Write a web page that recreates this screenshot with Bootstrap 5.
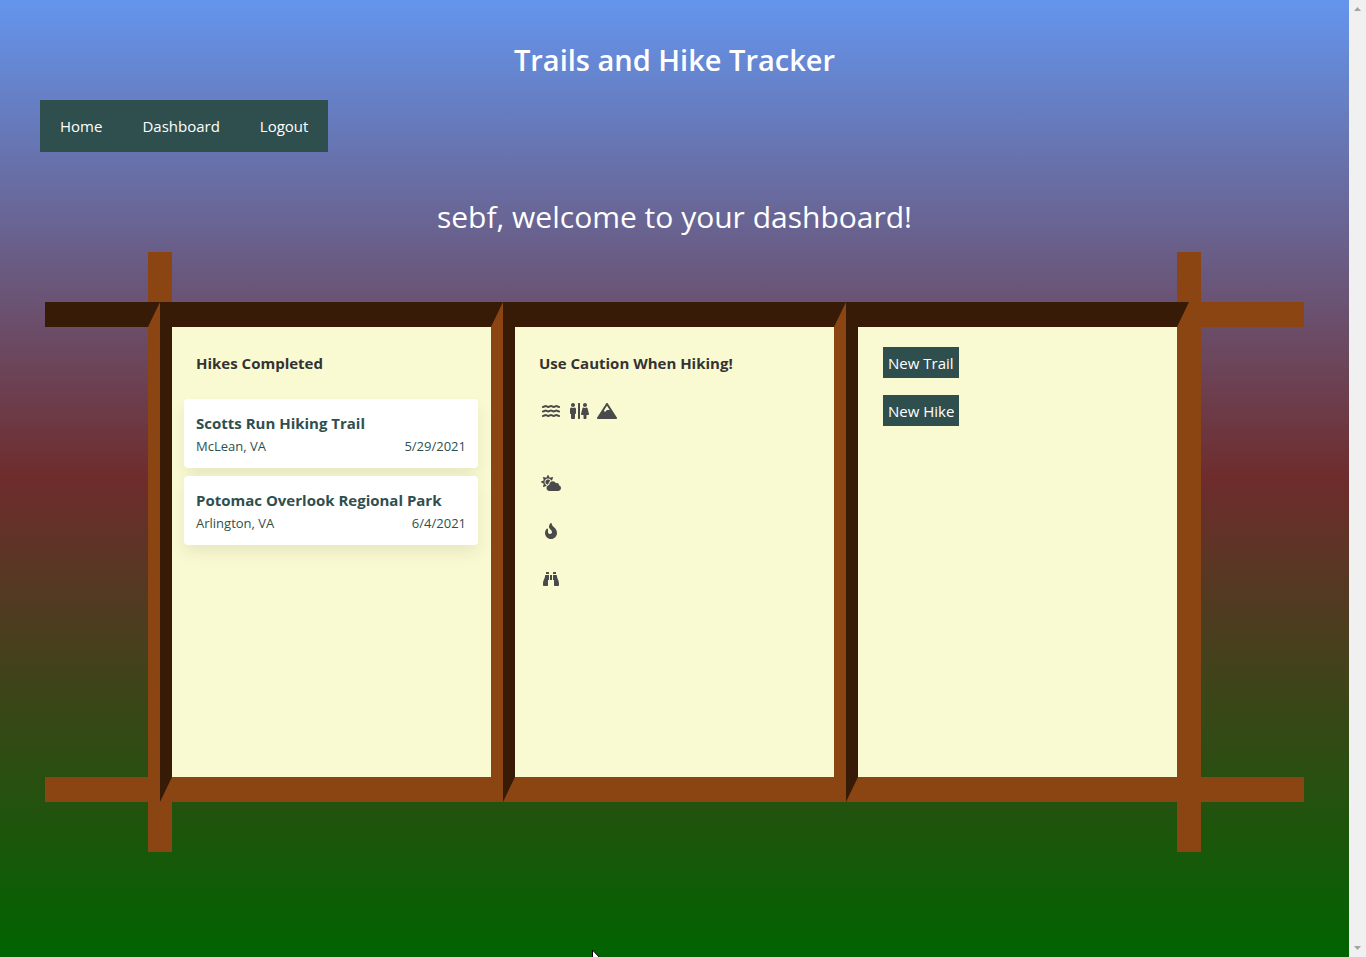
<!DOCTYPE html>
<html lang="en">
<head>
<meta charset="utf-8">
<meta name="viewport" content="width=device-width, initial-scale=1">
<title>Trails and Hike Tracker</title>
<link href="https://cdn.jsdelivr.net/npm/bootstrap@5.3.0/dist/css/bootstrap.min.css" rel="stylesheet">
<style>
  :root { --wood: #8b4513; --wood-dark: #381b07; --slate: #2f4f4f; --paper: #fafad2; }
  body { font-family: "Open Sans", "Noto Sans", sans-serif; font-size: 15px; line-height: 24px; color: #333; }
  .sky { background: linear-gradient(cornflowerblue, #6e2c2c, darkgreen); min-width: 0; }
  .site-title { font-size: 29px; line-height: 40px; font-weight: 600; color: #fff; padding: 40px 0 20px; }
  .welcome { font-size: 30px; line-height: 40px; font-weight: 400; color: #fff; padding: 45px 0 15px; }
  .site-nav { background: var(--slate); margin-left: 40px; }
  .site-nav a { color: #fff; padding: 14px 20px; }
  .board { display: grid; grid-template-columns: minmax(0,115fr) repeat(3, minmax(0,343fr)) minmax(0,115fr); margin: 0 45px; }
  .post { width: 24px; height: 50px; background: var(--wood); }
  .post-left { grid-column: 1; justify-self: end; margin-right: -12px; }
  .post-right { grid-column: 5; margin-left: -12px; }
  .beam, .panel { border: solid var(--wood); border-width: 25px 12px; min-height: 500px; }
  .beam-left { border-left-width: 0; border-top-color: var(--wood-dark); }
  .beam-right { border-right-width: 0; }
  .panel { background: var(--paper); border-top-color: var(--wood-dark); border-left-color: var(--wood-dark); padding: 24px 13px 12px 12px; }
  .panel h2 { font-size: 15px; line-height: 24px; font-weight: 700; margin: 0 12px 24px; }
  .hike { border: 0; border-radius: 4px; padding: 12px 12px 11px; margin-bottom: 8px; box-shadow: 0 8px 16px rgba(0,0,0,.08); color: var(--slate); }
  .hike h3 { font-size: 15px; line-height: 24px; font-weight: 700; margin: 0 0 1px; }
  .hike p { font-size: 13px; line-height: 21px; margin: 0; }
  .notes { margin: 0 14px; gap: 24px; }
  .notes svg { width: 20px; height: 16px; fill: #4a4a4a; }
  .panel.actions { padding: 20px 25px; gap: 17px; }
  .action { background: var(--slate); color: #fff; border: 0; padding: 4px 5px 3px; }
  .scroll-strip { width: 17px; background: #f0f0f0; padding: 7px 0; }
  .pointer { position: fixed; left: 592px; bottom: 0; }
</style>
</head>
<body class="d-flex min-vh-100">
<svg width="0" height="0" class="position-absolute" aria-hidden="true">
  <symbol id="water" viewBox="0 0 576 512"><g fill="none" stroke="#4a4a4a" stroke-width="64" stroke-linecap="round"><path id="wave" d="M28 128c50 0 60-32 86-32s50 32 87 32 60-32 87-32 50 32 87 32 60-32 87-32 36 32 86 32"/><use href="#wave" y="144"/><use href="#wave" y="288"/></g></symbol>
  <symbol id="restroom" viewBox="0 0 640 512"><path d="M128 128c35.3 0 64-28.7 64-64S163.3 0 128 0 64 28.7 64 64s28.7 64 64 64zm384 0c35.3 0 64-28.7 64-64S547.3 0 512 0s-64 28.7-64 64 28.7 64 64 64zm127.3 226.500l-45.600-185.800c-3.300-13.500-15.500-23-29.800-24.200-15 9.700-32.800 15.500-52 15.500-19.200 0-37-5.800-52-15.500-14.300 1.200-26.500 10.700-29.800 24.200l-45.600 185.800C381 369.600 393 384 409.100 384H464v104c0 13.300 10.700 24 24 24h48c13.300 0 24-10.700 24-24V384h54.900c16.100 0 28.100-14.400 24.400-29.500zM336 0h-32c-8.800 0-16 7.200-16 16v480c0 8.800 7.200 16 16 16h32c8.800 0 16-7.200 16-16V16c0-8.800-7.200-16-16-16zM180.100 144.400c-15 9.800-32.900 15.600-52.100 15.600-19.200 0-37.100-5.800-52.100-15.600C51.300 146.500 32 166.900 32 192v136c0 13.300 10.700 24 24 24h8v136c0 13.300 10.700 24 24 24h80c13.300 0 24-10.700 24-24V352h8c13.300 0 24-10.700 24-24V192c0-25.100-19.300-45.500-43.900-47.600z"/></symbol>
  <symbol id="mountain" viewBox="0 0 640 512"><path d="M634.92 462.7l-288-448C341.03 5.54 330.89 0 320 0s-21.030 5.540-26.920 14.700l-288 448a32 32 0 0 0-1.170 32.640A32 32 0 0 0 32 512h576c11.710 0 22.480-6.390 28.090-16.670a32 32 0 0 0-1.170-32.630zM320 91.180L405.390 224H320l-64 64-38.060-38.060L320 91.180z"/></symbol>
  <symbol id="cloud-sun" viewBox="0 0 640 512"><path d="M575.2 325.7c.2-1.9.8-3.7.8-5.6 0-35.3-28.7-64-64-64-12.6 0-24.2 3.8-34.1 10-17.6-38.8-56.5-66-101.9-66-61.8 0-112 50.1-112 112 0 3 .7 5.8.9 8.700-49.600 3.700-88.900 44.700-88.900 95.300 0 53 43 96 96 96h272c53 0 96-43 96-96 0-42.100-27.200-77.400-64.800-90.400zm-430.400-22.600c-43.700-43.700-43.700-114.700 0-158.300 43.700-43.700 114.700-43.700 158.400 0 9.700 9.700 16.900 20.900 22.300 32.700 9.800-3.700 20.100-6 30.700-7.500L386 81.100c4-11.900-7.300-23.100-19.200-19.200L279 91.200 237.500 8.400C232-2.800 216-2.800 210.400 8.400L169 91.200 81.100 61.900C69.300 58 58 69.300 61.900 81.100l29.300 87.800-82.800 41.500c-11.200 5.600-11.200 21.500 0 27.100l82.800 41.400-29.300 87.800c-4 11.900 7.300 23.100 19.200 19.200l76.100-25.300c6.100-12.400 14-23.700 23.600-33.500-13.100-5.400-25.400-13.400-36-24zm-4.800-79.200c0 40.800 29.300 74.800 67.900 82.300 8-4.700 16.300-8.800 25.200-11.700 5.400-44.300 31-82.500 67.400-105C287.300 160.400 258 140 224 140c-46.300 0-84 37.600-84 83.900z"/></symbol>
  <symbol id="fire" viewBox="0 0 384 512"><path d="M216 23.860c0-23.800-30.650-32.770-44.150-13.040C48 191.850 224 200 224 288c0 35.630-29.110 64.460-64.850 63.990-35.170-.450-63.150-29.770-63.150-64.940v-85.510c0-21.700-26.470-32.230-41.430-16.500C27.800 213.160 0 261.330 0 320c0 105.870 86.130 192 192 192s192-86.130 192-192c0-170.290-168-193-168-296.140z"/></symbol>
  <symbol id="binoculars" viewBox="0 0 512 512"><path d="M416 48c0-8.840-7.160-16-16-16h-64c-8.840 0-16 7.160-16 16v48h96V48zM63.910 159.990C61.400 253.840 3.460 274.220 0 404v44c0 17.670 14.330 32 32 32h96c17.670 0 32-14.330 32-32V288h32V128H95.840c-17.630 0-31.450 14.370-31.930 31.990zm384.180 0c-.480-17.620-14.300-31.990-31.930-31.990H320v160h32v160c0 17.670 14.330 32 32 32h96c17.670 0 32-14.330 32-32v-44c-3.460-129.780-61.400-150.160-63.910-244.010zM176 32h-64c-8.840 0-16 7.160-16 16v48h96V48c0-8.840-7.160-16-16-16zm48 256h64V128h-64v160z"/></symbol>
</svg>

<div class="sky flex-grow-1">
  <header class="d-flex flex-column align-items-start">
    <h1 class="site-title align-self-stretch text-center mb-0">Trails and Hike Tracker</h1>
    <nav class="site-nav d-flex flex-wrap">
      <a class="text-decoration-none" href="#">Home</a>
      <a class="text-decoration-none" href="#">Dashboard</a>
      <a class="text-decoration-none" href="#">Logout</a>
    </nav>
  </header>
  <main class="pb-5">
    <h2 class="welcome text-center mb-0">sebf, welcome to your dashboard!</h2>
    <div class="board">
      <div class="post post-left"></div>
      <div class="post post-right"></div>
      <div class="beam beam-left"></div>
      <section class="panel">
        <h2>Hikes Completed</h2>
        <article class="card hike">
          <h3>Scotts Run Hiking Trail</h3>
          <p class="d-flex justify-content-between"><span>McLean, VA</span><span>5/29/2021</span></p>
        </article>
        <article class="card hike">
          <h3>Potomac Overlook Regional Park</h3>
          <p class="d-flex justify-content-between"><span>Arlington, VA</span><span>6/4/2021</span></p>
        </article>
      </section>
      <section class="panel">
        <h2>Use Caution When Hiking!</h2>
        <div class="notes d-flex flex-column">
          <div class="d-flex align-items-center gap-2 pt-1 mb-4 pb-1"><svg><use href="#water"/></svg><svg><use href="#restroom"/></svg><svg><use href="#mountain"/></svg></div>
          <div class="d-flex py-1"><svg><use href="#cloud-sun"/></svg></div>
          <div class="d-flex py-1"><svg><use href="#fire"/></svg></div>
          <div class="d-flex py-1"><svg><use href="#binoculars"/></svg></div>
        </div>
      </section>
      <section class="panel actions d-flex flex-column align-items-start">
        <button class="action" type="button">New Trail</button>
        <button class="action" type="button">New Hike</button>
      </section>
      <div class="beam beam-right"></div>
      <div class="post post-left"></div>
      <div class="post post-right"></div>
    </div>
  </main>
</div>
<div class="scroll-strip d-flex flex-column justify-content-between align-items-center flex-shrink-0" aria-hidden="true">
  <svg width="7" height="4"><path d="M0 4L3.500 0 7 4z" fill="#a3a3a3"/></svg>
  <svg width="7" height="4"><path d="M0 0L3.500 4 7 0z" fill="#a3a3a3"/></svg>
</div>
<svg class="pointer" width="8" height="7" aria-hidden="true"><path d="M.5 0V8H8z" fill="#fff" stroke="#000"/></svg>
</body>
</html>
